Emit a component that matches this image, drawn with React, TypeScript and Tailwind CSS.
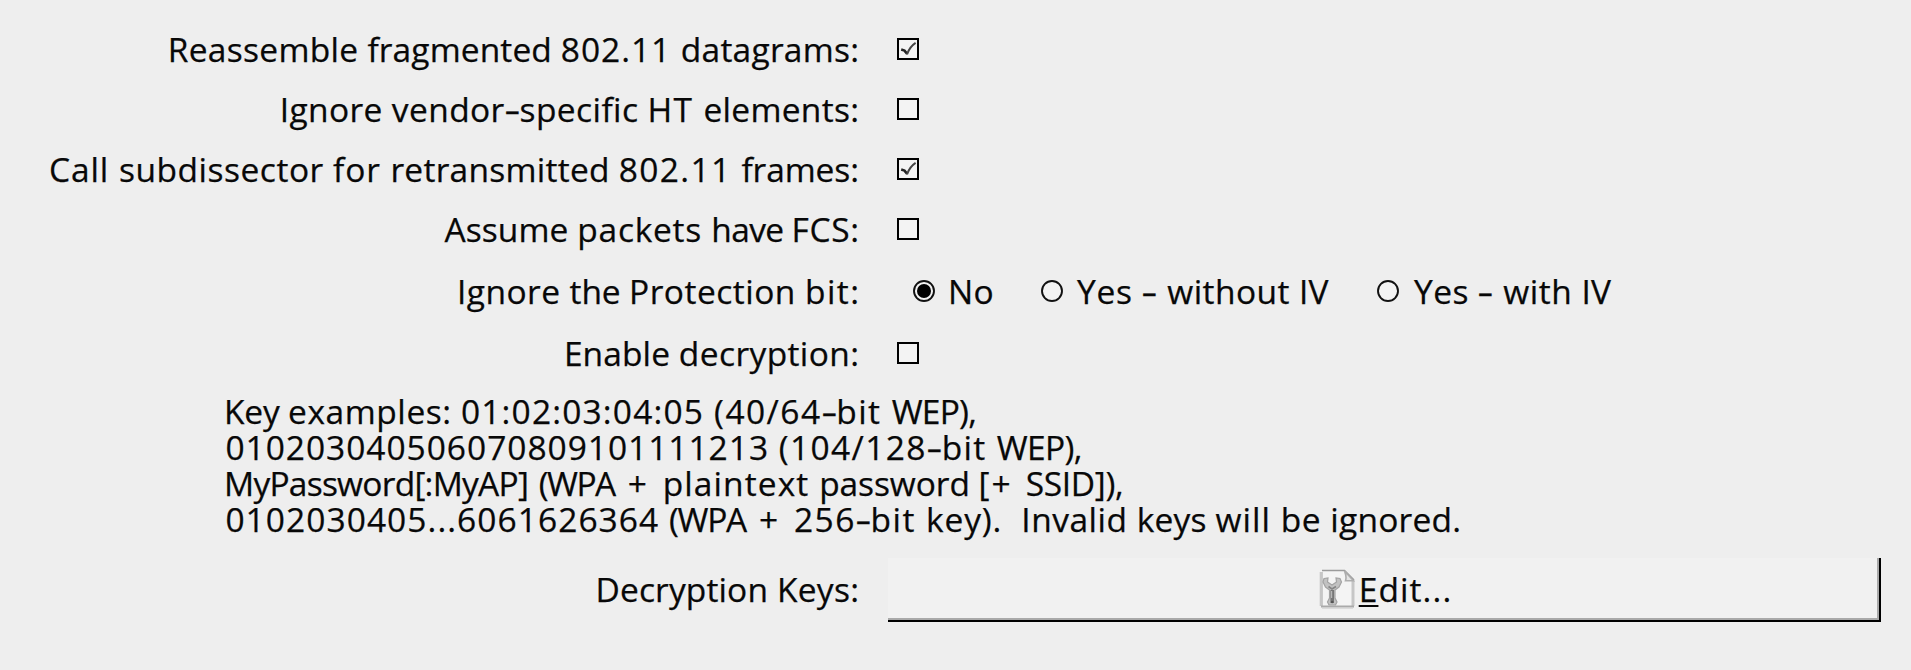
import React from "react";

type Word = [text: string, tracking: string];

function Hyphen() {
  return (
    <span className="mx-[2px] inline-block scale-x-150 tracking-normal">-</span>
  );
}

function Words({ words }: { words: Word[] }) {
  return (
    <>
      {words.map(([text, tracking], i) => {
        const parts = text.split("-");
        return (
          <span key={i} className={tracking}>
            {parts.map((part, j) => (
              <React.Fragment key={j}>
                {j > 0 && <Hyphen />}
                {part}
              </React.Fragment>
            ))}
          </span>
        );
      })}
    </>
  );
}

function Label({ words }: { words: Word[] }) {
  return (
    <div className="w-[859px] shrink-0 text-right">
      <Words words={words} />:
    </div>
  );
}

function Checkbox({ checked = false }: { checked?: boolean }) {
  return (
    <div
      role="checkbox"
      aria-checked={checked}
      className="ml-[38px] h-[22px] w-[22px] shrink-0 border-2 border-black bg-[#f3f3f3]"
    >
      {checked && (
        <svg viewBox="0 0 18 18" className="block h-[18px] w-[18px]" fill="none">
          <path d="M2.2 9.6 L5.5 10.6 L8.2 13.8" stroke="#222" strokeWidth="2.6" />
          <path d="M8 14.3 C9.5 10 12.5 5.5 16.6 2.8" stroke="#444" strokeWidth="2" />
        </svg>
      )}
    </div>
  );
}

function Radio({ checked = false }: { checked?: boolean }) {
  return (
    <svg viewBox="0 0 22 22" className="block h-[22px] w-[22px] shrink-0">
      <circle cx="11" cy="11" r="10" fill="#f3f3f3" stroke="#111" strokeWidth="1.9" />
      {checked && <circle cx="11" cy="11" r="7" fill="#000" />}
    </svg>
  );
}

function EditIcon() {
  return (
    <svg viewBox="0 0 36 40" className="block h-[40px] w-[36px] shrink-0" fill="none">
      <path d="M3 1.5 H25 L34 11 V38 H2 V2.5 Z" fill="#f4f4f4" />
      <path d="M2.3 3 V37" stroke="#c6c6c6" strokeWidth="3.2" />
      <path d="M34 11.5 V37" stroke="#c6c6c6" strokeWidth="3" />
      <path d="M3 1.5 H25.5 L35 11" stroke="#9b9b9b" strokeWidth="1.6" />
      <path d="M25.5 2 C26.5 5 28 7.5 26.5 11.8 H34.5 Z" fill="#e4e4e4" stroke="#adadad" strokeWidth="1.6" />
      <path d="M2 37.5 H35" stroke="#aaa" strokeWidth="1.8" />
      <path d="M3 39.3 H34" stroke="#d6d6d6" strokeWidth="1" />
      <path
        d="M5 9.5 L9 9 L8.5 13 L13 16 L17.5 13 L17 9 L21 9.5 L22.5 13 L20 18 L16 21 L16 29 L18 33 L16.5 36 H10 L8.5 33 L10.5 29 V21 L6.5 18 L4 13 Z"
        fill="#c2c2c2"
        stroke="#a3a3a3"
        strokeWidth="1.2"
      />
      <path d="M13.2 21 V34" stroke="#777" strokeWidth="3.6" />
      <path d="M12.6 22 V29" stroke="#b8b8b8" strokeWidth="1.2" />
      <path d="M9.5 17.5 L13 20 L17 17.5" stroke="#858585" strokeWidth="1.6" />
      <circle cx="13.2" cy="33" r="1.3" fill="#555" />
    </svg>
  );
}

export default function App() {
  return (
    <div className="h-[670px] w-full overflow-hidden bg-[#eeeeee] pt-[19px] font-['Open_Sans','Noto_Sans',sans-serif] text-[33.5px] leading-[36px] whitespace-pre text-[#080808] [-webkit-text-stroke:0.25px_#080808]">
      <div className="flex h-[60px] items-center">
        <Label
          words={[
            ["Reassemble ", "tracking-[0.3px]"],
            ["fragmented ", "tracking-[0.12px]"],
            ["802.11 ", "tracking-[0.96px]"],
            ["datagrams", "tracking-[0.25px]"],
          ]}
        />
        <Checkbox checked />
      </div>
      <div className="flex h-[60px] items-center">
        <Label
          words={[
            ["Ignore ", "tracking-[0.38px]"],
            ["vendor-specific ", "tracking-[0.42px]"],
            ["HT ", "tracking-[1.34px]"],
            ["elements", "tracking-[0.3px]"],
          ]}
        />
        <Checkbox />
      </div>
      <div className="flex h-[60px] items-center">
        <Label
          words={[
            ["Call ", "tracking-[0.93px]"],
            ["subdissector ", "tracking-[0.53px]"],
            ["for ", "tracking-[0.89px]"],
            ["retransmitted ", "tracking-[0.27px]"],
            ["802.11 ", "tracking-[1.33px]"],
            ["frames", "tracking-[-0.1px]"],
          ]}
        />
        <Checkbox checked />
      </div>
      <div className="flex h-[60px] items-center">
        <Label
          words={[
            ["Assume ", "tracking-[0.1px]"],
            ["packets ", "tracking-[0.73px]"],
            ["have ", "tracking-[-0.65px]"],
            ["FCS", "tracking-[0.63px]"],
          ]}
        />
        <Checkbox />
      </div>
      <div className="flex h-[64px] items-center">
        <Label
          words={[
            ["Ignore ", "tracking-[0.45px]"],
            ["the ", "tracking-[-0.15px]"],
            ["Protection ", "tracking-[0.5px]"],
            ["bit", "tracking-[1.4px]"],
          ]}
        />
        <div className="ml-[54px] flex items-center">
          <div className="flex w-[128px] items-center gap-[13px]">
            <Radio checked />
            <span className="tracking-[0.2px]">No</span>
          </div>
          <div className="flex w-[336px] items-center gap-[14px]">
            <Radio />
            <span>
              <Words
                words={[
                  ["Yes ", "tracking-[0.71px]"],
                  ["- ", "tracking-[1.73px]"],
                  ["without ", "tracking-[0.44px]"],
                  ["IV", "tracking-[0px]"],
                ]}
              />
            </span>
          </div>
          <div className="flex items-center gap-[15px]">
            <Radio />
            <span>
              <Words
                words={[
                  ["Yes ", "tracking-[0.44px]"],
                  ["- ", "tracking-[1.78px]"],
                  ["with ", "tracking-[0.55px]"],
                  ["IV", "tracking-[0px]"],
                ]}
              />
            </span>
          </div>
        </div>
      </div>
      <div className="flex h-[60px] items-center">
        <Label
          words={[
            ["Enable ", "tracking-[0.1px]"],
            ["decryption", "tracking-[0.39px]"],
          ]}
        />
        <Checkbox />
      </div>
      <div className="pt-[10px] pl-[224px]">
        <div className="h-[36px]">
          <Words
            words={[
              ["Key ", "tracking-[-0.18px]"],
              ["examples: ", "tracking-[0.56px]"],
              ["01:02:03:04:05 ", "tracking-[1.18px]"],
              ["(40/64-bit ", "tracking-[1.44px]"],
              ["WEP),", "tracking-[-0.77px]"],
            ]}
          />
        </div>
        <div className="h-[36px] pl-[1.4px]">
          <Words
            words={[
              ["010203040506070809101111213 ", "tracking-[0.98px]"],
              ["(104/128-bit ", "tracking-[1.38px]"],
              ["WEP),", "tracking-[-0.67px]"],
            ]}
          />
        </div>
        <div className="h-[36px]">
          <Words
            words={[
              ["MyPassword[:MyAP]", "tracking-[-0.75px]"],
              [" ", "tracking-[1.8px]"],
              ["(WPA", "tracking-[-1.5px]"],
              [" ", "tracking-[4.2px]"],
              ["+", "tracking-[1.2px]"],
              [" ", "tracking-[5.9px]"],
              ["plaintext ", "tracking-[1.1px]"],
              ["password ", "tracking-[-0.09px]"],
              ["[+", "tracking-[2px]"],
              [" ", "tracking-[4.5px]"],
              ["SSID]),", "tracking-[-0.33px]"],
            ]}
          />
        </div>
        <div className="h-[36px] pl-[1.4px]">
          <Words
            words={[
              ["0102030405...6061626364 ", "tracking-[1.06px]"],
              ["(WPA", "tracking-[-1.3px]"],
              [" ", "tracking-[4.4px]"],
              ["+", "tracking-[1.2px]"],
              [" ", "tracking-[5.8px]"],
              ["256-bit ", "tracking-[1.46px]"],
              ["key).  ", "tracking-[0.85px]"],
              ["Invalid ", "tracking-[0.51px]"],
              ["keys ", "tracking-[0.17px]"],
              ["will ", "tracking-[1.03px]"],
              ["be ", "tracking-[0.56px]"],
              ["ignored.", "tracking-[0.21px]"],
            ]}
          />
        </div>
      </div>
      <div className="mt-[21px] flex">
        <div className="flex h-[62px] items-center">
          <Label
            words={[
              ["Decryption ", "tracking-[0.13px]"],
              ["Keys", "tracking-[0.3px]"],
            ]}
          />
        </div>
        <button
          type="button"
          className="ml-[29px] flex h-[64px] w-[993px] items-center justify-center bg-[#f1f1f1] pb-[2px] pl-[2px] shadow-[inset_-2px_-2px_0_#000,inset_-4px_-4px_0_#a9a9a9]"
        >
          <EditIcon />
          <span className="ml-[4px] tracking-[1.09px]">
            <span className="underline decoration-2 underline-offset-[3px]">E</span>dit...
          </span>
        </button>
      </div>
    </div>
  );
}
